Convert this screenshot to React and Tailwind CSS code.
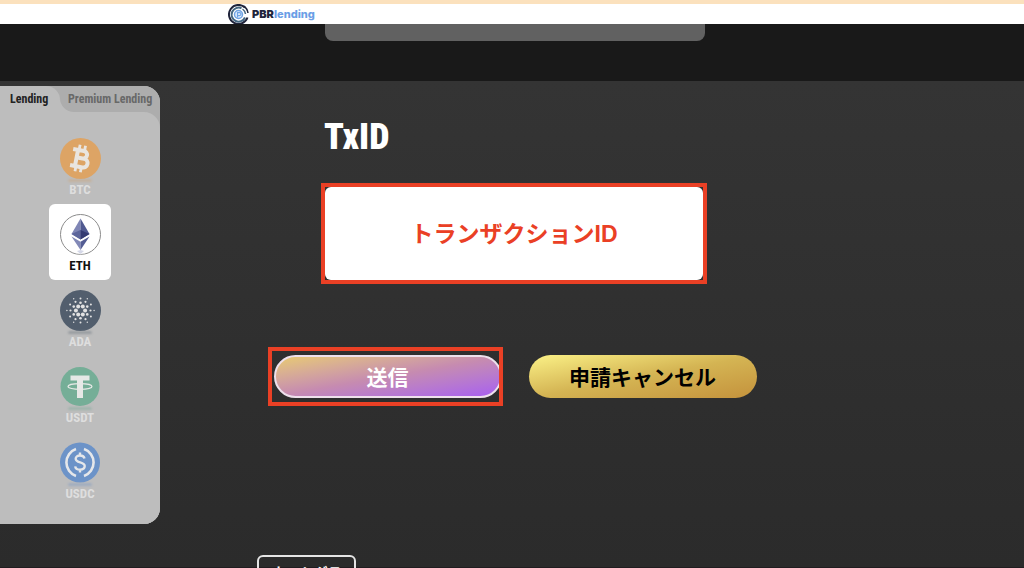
import { useState } from 'react'

const narrow = 'font-["Roboto_Condensed","Roboto",sans-serif]'
const japanese = 'font-["Liberation_Sans","Noto_Sans_CJK_JP",sans-serif]'

function Logo() {
  return (
    <svg viewBox="0 0 42 42" className="size-[21px]" aria-hidden="true" fill="none">
      <path d="M34 7A19 19 0 1 0 39 27" stroke="#20243b" strokeWidth="4" />
      <path d="M31 4A19 19 0 0 1 40 18" stroke="#20243b" strokeWidth="3" />
      <path d="M27 8.5A14 14 0 1 0 34 27" stroke="#456781" strokeWidth="4" />
      <path d="M29 10A14 14 0 0 1 35 20" stroke="#456781" strokeWidth="3" />
      <circle cx="21" cy="21" r="8" stroke="#6fa3e4" strokeWidth="3" fill="#e4effc" />
      <path d="M19 27V17h4a3 3 0 0 1 0 6h-4" stroke="#6fa3e4" strokeWidth="2.5" />
    </svg>
  )
}

function Btc() {
  return (
    <>
      <circle cx="20.5" cy="20.5" r="20.5" fill="#dda465" />
      <g transform="rotate(11 20.5 20.5)" fill="none" stroke="#e9e5e0">
        <path d="M11.5 12.5h11a3.8 3.8 0 0 1 0 7.6H16M22 20.1h2a4.4 4.4 0 0 1 0 8.8H11.5M16.5 12.5v16.4" strokeWidth="4" />
        <path d="M17.5 7v5M23 7v5M17.5 29v5M23 29v5" strokeWidth="2.8" />
      </g>
    </>
  )
}

function Eth() {
  return (
    <>
      <circle cx="20.5" cy="20.5" r="20" fill="#fff" stroke="#8b8b8b" />
      <path d="M20.5 4.5 11.5 20l9 5.5z" fill="#7f86b5" />
      <path d="m20.5 4.5 9 15.5-9 5.5z" fill="#505990" />
      <path d="m11.5 20 9-4v9.5z" fill="#5c659b" />
      <path d="m29.5 20-9-4v9.5z" fill="#343b72" />
      <path d="m11.5 22.5 9 5.3V36z" fill="#8289b7" />
      <path d="m29.5 22.5-9 5.3V36z" fill="#545d94" />
      <path d="m17 37 3.5 3 3.5-3-3.5-1z" fill="#d5d8e8" />
    </>
  )
}

// rings of dots: [count, distance from the centre, dot radius, start angle]
const adaRings = [
  [6, 4.6, 2, 0],
  [6, 7.8, 1.3, 30],
  [6, 10, 1.1, 0],
  [6, 12, 1, 30],
  [6, 13.6, 0.7, 0],
]

function Ada() {
  return (
    <>
      <circle cx="20.5" cy="20.5" r="20.5" fill="#525e6d" />
      {adaRings.map(([count, dist, r, start]) =>
        Array.from({ length: count }, (_, i) => {
          const angle = ((start + (360 / count) * i) * Math.PI) / 180
          return (
            <circle
              key={`${dist}-${i}`}
              cx={20.5 + dist * Math.cos(angle)}
              cy={20.5 + dist * Math.sin(angle)}
              r={r}
              fill="#e2e2e2"
            />
          )
        })
      )}
    </>
  )
}

function Usdt() {
  return (
    <>
      <circle cx="20" cy="20.5" r="19.5" fill="#75ae97" />
      <path d="M10.5 9.5h19v5H23V32h-6V14.5h-6.5z" fill="#e6e8e6" />
      <ellipse cx="20" cy="20.5" rx="12" ry="2.8" fill="none" stroke="#e6e8e6" strokeWidth="1.2" />
    </>
  )
}

function Usdc() {
  return (
    <>
      <circle cx="20" cy="20.5" r="20" fill="#6c93c8" />
      <g fill="none" stroke="#e5e7ea" strokeWidth="2.6">
        <path d="M16 7a14.3 14.3 0 0 0 0 27M24 7a14.3 14.3 0 0 1 0 27" />
        <path d="M24.5 16.5c-.4-2-2-3-4.5-3s-4.3 1.2-4.3 3.3c0 4.7 9 2.5 9 7.3 0 2.2-1.9 3.5-4.7 3.5s-4.5-1.2-4.8-3.3M20 10.5v3M20 27.5v3" strokeWidth="2.4" />
      </g>
    </>
  )
}

const coins = [
  { name: 'BTC', Icon: Btc, shadow: 'bg-[#c9ab8a]' },
  { name: 'ETH', Icon: Eth, shadow: 'bg-white' },
  { name: 'ADA', Icon: Ada, shadow: 'bg-[#7e858d]' },
  { name: 'USDT', Icon: Usdt, shadow: 'bg-[#8dafa2]' },
  { name: 'USDC', Icon: Usdc, shadow: 'bg-[#8ba1c2]' },
]

function Sidebar({ coin, setCoin }) {
  return (
    <aside className={`mt-[5px] w-40 shrink-0 self-start overflow-hidden rounded-r-2xl bg-[#bdbdbd] text-xs font-bold ${narrow}`}>
      <div className="flex h-[26px]">
        <div className="w-[60px] bg-[#adadad]">
          <button className="h-full w-full rounded-tr-[14px] bg-[#bdbdbd] pl-[10px] text-left text-[#222]">
            Lending
          </button>
        </div>
        <button className="flex-1 rounded-bl-[14px] bg-[#adadad] pl-2 text-left whitespace-nowrap text-[#686868]">
          Premium Lending
        </button>
      </div>
      <div className="bg-[#adadad]">
        <div className="flex flex-col items-center rounded-tr-2xl bg-[#bdbdbd] pt-4 pb-4">
          {coins.map(({ name, Icon, shadow }) => (
            <button
              key={name}
              onClick={() => setCoin(name)}
              className={`flex h-[76px] w-[62px] flex-col items-center rounded-md pt-[10px] text-[13px] ${
                coin === name ? 'bg-white text-[#111]' : 'text-[#dedede]'
              }`}
            >
              <svg viewBox="0 0 41 41" className="size-[41px]" aria-hidden="true">
                <Icon />
              </svg>
              <span className={`h-[3px] w-6 rounded-full opacity-60 blur-[1px] ${shadow}`} />
              <span className="leading-4">{name}</span>
            </button>
          ))}
        </div>
      </div>
    </aside>
  )
}

export default function App() {
  const [coin, setCoin] = useState('ETH')
  const [txId, setTxId] = useState('トランザクションID')

  return (
    <div className={`flex h-screen flex-col overflow-hidden bg-[#2b2b2b] ${japanese}`}>
      <header className="shrink-0 border-t-4 border-[#fbe1bd] bg-white">
        <a href="#" className="ml-[228px] flex h-5 items-center gap-[3px] font-['Inter',sans-serif] text-[11px] font-black text-[#20243b]">
          <Logo />
          <span>PBR<span className="font-extrabold text-[#6b9ee6]">lending</span></span>
        </a>
      </header>

      <div className="flex h-[57px] shrink-0 justify-center bg-[#191919] pl-[6px]">
        <div className="h-[17px] w-[380px] rounded-b-lg bg-[#616161]" />
      </div>

      <div className="flex flex-1 border-b border-[#211d20] bg-linear-to-b from-[#343434] to-[#2b2b2b]">
        <Sidebar coin={coin} setCoin={setCoin} />

        <main className="flex h-0 flex-1 flex-col items-center pt-9 pr-39">
          <form className="flex flex-col items-center" onSubmit={(e) => e.preventDefault()}>
            <div className="flex w-[386px] flex-col">
              <label htmlFor="txid" className={`pl-[3px] text-4xl leading-10 font-black text-white ${narrow}`}>
                TxID
              </label>
              <div className="mt-[26px] border-4 border-[#ea4025]">
                <input
                  id="txid"
                  value={txId}
                  onChange={(e) => setTxId(e.target.value)}
                  className="block h-[93px] w-full rounded-md bg-white pb-1 text-center text-[23px] font-bold text-[#ea4025] outline-none"
                />
              </div>
            </div>

            <div className="mt-[71px] flex gap-[27px] pl-0.5 text-[21px] font-bold">
              <div className="relative">
                <button
                  type="submit"
                  className="block h-[43px] w-[228px] rounded-full border-2 border-[#eee0ec] bg-linear-to-br from-[#e8ca70] via-[#c68bb0] to-[#a95df0] pt-[3px] text-white"
                >
                  送信
                </button>
                <span className="pointer-events-none absolute -top-2 -right-px -bottom-2 -left-[6px] border-4 border-[#ea4025]" />
              </div>
              <button
                type="button"
                className="h-[43px] w-[228px] rounded-full bg-linear-to-br from-[#fbf287] via-[#d4b453] to-[#c4923c] pt-[3px] text-black"
              >
                申請キャンセル
              </button>
            </div>
          </form>

          <div className="mt-[157px] w-[514px]">
            <button className="h-9 w-[99px] rounded-md border-2 border-[#e5e5e5] text-sm font-bold text-white">
              ネットグラ
            </button>
          </div>
        </main>
      </div>
    </div>
  )
}
